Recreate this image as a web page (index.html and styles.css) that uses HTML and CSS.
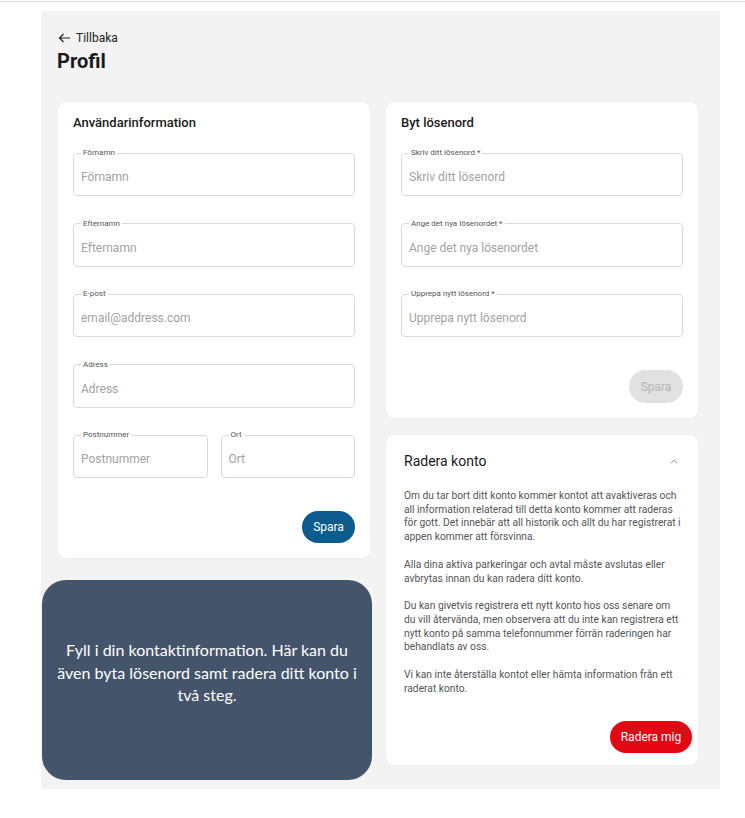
FILE: index.html
```html
<!DOCTYPE html>
<html lang="sv">
<head>
    <meta charset="UTF-8">
    <meta name="viewport" content="width=device-width, initial-scale=1.0">
    <title>Profil</title>
    <link rel="stylesheet" href="styles.css">
</head>
<body>

<div class="topline"></div>

<div class="page">
    <a class="back" href="#">
        <svg width="13" height="10" viewBox="0 0 13 10"><path d="M12 5H1.5M5.5 1L1.5 5l4 4" fill="none" stroke="#222" stroke-width="1.2"/></svg>
        Tillbaka
    </a>
    <h1>Profil</h1>

    <div class="columns">
        <div class="col">
            <div class="card">
                <h2>Användarinformation</h2>
                <div class="fields">
                    <fieldset class="field"><legend>Förnamn</legend><input placeholder="Förnamn"></fieldset>
                    <fieldset class="field"><legend>Efternamn</legend><input placeholder="Efternamn"></fieldset>
                    <fieldset class="field"><legend>E-post</legend><input placeholder="email@address.com"></fieldset>
                    <fieldset class="field"><legend>Adress</legend><input placeholder="Adress"></fieldset>
                    <div class="row">
                        <fieldset class="field"><legend>Postnummer</legend><input placeholder="Postnummer"></fieldset>
                        <fieldset class="field"><legend>Ort</legend><input placeholder="Ort"></fieldset>
                    </div>
                </div>
                <div class="actions">
                    <button class="btn btn-primary">Spara</button>
                </div>
            </div>

            <!-- hjälptext -->
            <div class="hint">
                Fyll i din kontaktinformation. Här kan du även byta lösenord samt radera ditt konto i två steg.
            </div>
        </div>

        <div class="col">
            <div class="card">
                <h2>Byt lösenord</h2>
                <div class="fields">
                    <fieldset class="field"><legend>Skriv ditt lösenord *</legend><input type="password" placeholder="Skriv ditt lösenord"></fieldset>
                    <fieldset class="field"><legend>Ange det nya lösenordet *</legend><input type="password" placeholder="Ange det nya lösenordet"></fieldset>
                    <fieldset class="field"><legend>Upprepa nytt lösenord *</legend><input type="password" placeholder="Upprepa nytt lösenord"></fieldset>
                </div>
                <div class="actions">
                    <button class="btn btn-disabled" disabled>Spara</button>
                </div>
            </div>

            <div class="card delete">
                <div class="delete-head">
                    <h3>Radera konto</h3>
                    <svg width="8" height="5" viewBox="0 0 8 5"><path d="M1 4.2L4 1.2l3 3" fill="none" stroke="#888" stroke-width="1"/></svg>
                </div>
                <p>Om du tar bort ditt konto kommer kontot att avaktiveras och all information relaterad till detta konto kommer att raderas för gott. Det innebär att all historik och allt du har registrerat i appen kommer att försvinna.</p>
                <p>Alla dina aktiva parkeringar och avtal måste avslutas eller avbrytas innan du kan radera ditt konto.</p>
                <p>Du kan givetvis registrera ett nytt konto hos oss senare om du vill återvända, men observera att du inte kan registrera ett nytt konto på samma telefonnummer förrän raderingen har behandlats av oss.</p>
                <p>Vi kan inte återställa kontot eller hämta information från ett raderat konto.</p>
                <div class="actions delete-actions">
                    <button class="btn btn-danger">Radera mig</button>
                </div>
            </div>
        </div>
    </div>
</div>

</body>
</html>
```

FILE: styles.css
```css
body {
    margin: 0;
    padding: 0;
    background: #fff;
    font-family: Roboto, "Liberation Sans", sans-serif;
    color: #1a1a1a;
}
.topline {
    height: 1px;
    border-bottom: 1px solid #d4d4d4;
}
.page {
    margin: 9px 0 0 41px;
    width: 679px;
    box-sizing: border-box;
    padding: 20px 22px 9px 17px;
    background: #f3f3f3;
}
.back {
    display: flex;
    align-items: center;
    gap: 5px;
    font-size: 12px;
    color: #222;
    text-decoration: none;
    line-height: 14px;
}
h1 {
    margin: 4px 0 0 -1px;
    font-size: 20px;
    font-weight: 700;
    line-height: 24px;
}
.columns {
    display: grid;
    grid-template-columns: 312px 312px;
    gap: 16px;
    margin-top: 29px;
    align-items: start;
}
.col {
    display: flex;
    flex-direction: column;
}
.card {
    background: #fff;
    border-radius: 8px;
    padding: 13px 15px 15px 15px;
    box-shadow: 0 0 2px rgba(0, 0, 0, 0.06);
}
.card h2 {
    margin: 0;
    font-size: 13px;
    font-weight: 500;
    line-height: 16px;
}
.fields {
    display: flex;
    flex-direction: column;
    gap: 22.5px;
    margin-top: 17px;
}
.row {
    display: grid;
    grid-template-columns: 1fr 1fr;
    gap: 13px;
}
.field {
    margin: 0;
    padding: 0 6px 3px 7px;
    border: 1px solid #d9d9d9;
    border-radius: 4px;
    min-width: 0;
}
.field legend {
    font-size: 8px;
    line-height: 10px;
    color: #555;
    padding: 0 2px;
}
.field input {
    display: block;
    width: 100%;
    box-sizing: border-box;
    height: 30px;
    margin-top: 4px;
    border: none;
    outline: none;
    padding: 0;
    font-family: Roboto, "Liberation Sans", sans-serif;
    font-size: 12px;
    background: transparent;
}
.field input::placeholder {
    color: #a2a2a2;
}
.actions {
    display: flex;
    justify-content: flex-end;
    margin-top: 33px;
}
.btn {
    border: none;
    border-radius: 17px;
    height: 32px;
    padding: 0 10px;
    font-family: Roboto, "Liberation Sans", sans-serif;
    font-size: 12px;
    color: #fff;
    cursor: pointer;
}
.btn-primary {
    background-color: #0b5b8c;
    width: 53px;
    padding: 0;
}
.btn-disabled {
    background-color: #e1e1e1;
    color: #b5b5b5;
    width: 54px;
    height: 33px;
    padding: 0;
    cursor: default;
}
.btn-danger {
    background-color: #e30613;
    width: 82px;
    padding: 0;
}
.col .card + .card {
    margin-top: 17px;
}
.delete {
    padding: 18px 18px 12px 18px;
}
.delete-head {
    display: flex;
    justify-content: space-between;
    align-items: center;
    padding-right: 2px;
}
.delete h3 {
    margin: 0;
    font-size: 14px;
    font-weight: 400;
    line-height: 17px;
}
.delete p {
    margin: 14px -3px 0 0;
    font-size: 10.25px;
    line-height: 13.7px;
    color: #555;
}
.delete-head + p {
    margin-top: 19px;
}
.delete-actions {
    margin-top: 26px;
    margin-right: -12px;
}
.hint {
    margin: 22px -2px 0 -16px;
    height: 200px;
    box-sizing: border-box;
    padding: 0 12px 14px 12px;
    background: #44546a;
    border-radius: 24px;
    color: #fff;
    font-family: Lato, "Open Sans", sans-serif;
    font-size: 16px;
    line-height: 22.5px;
    text-align: center;
    display: flex;
    align-items: center;
    justify-content: center;
}
```
